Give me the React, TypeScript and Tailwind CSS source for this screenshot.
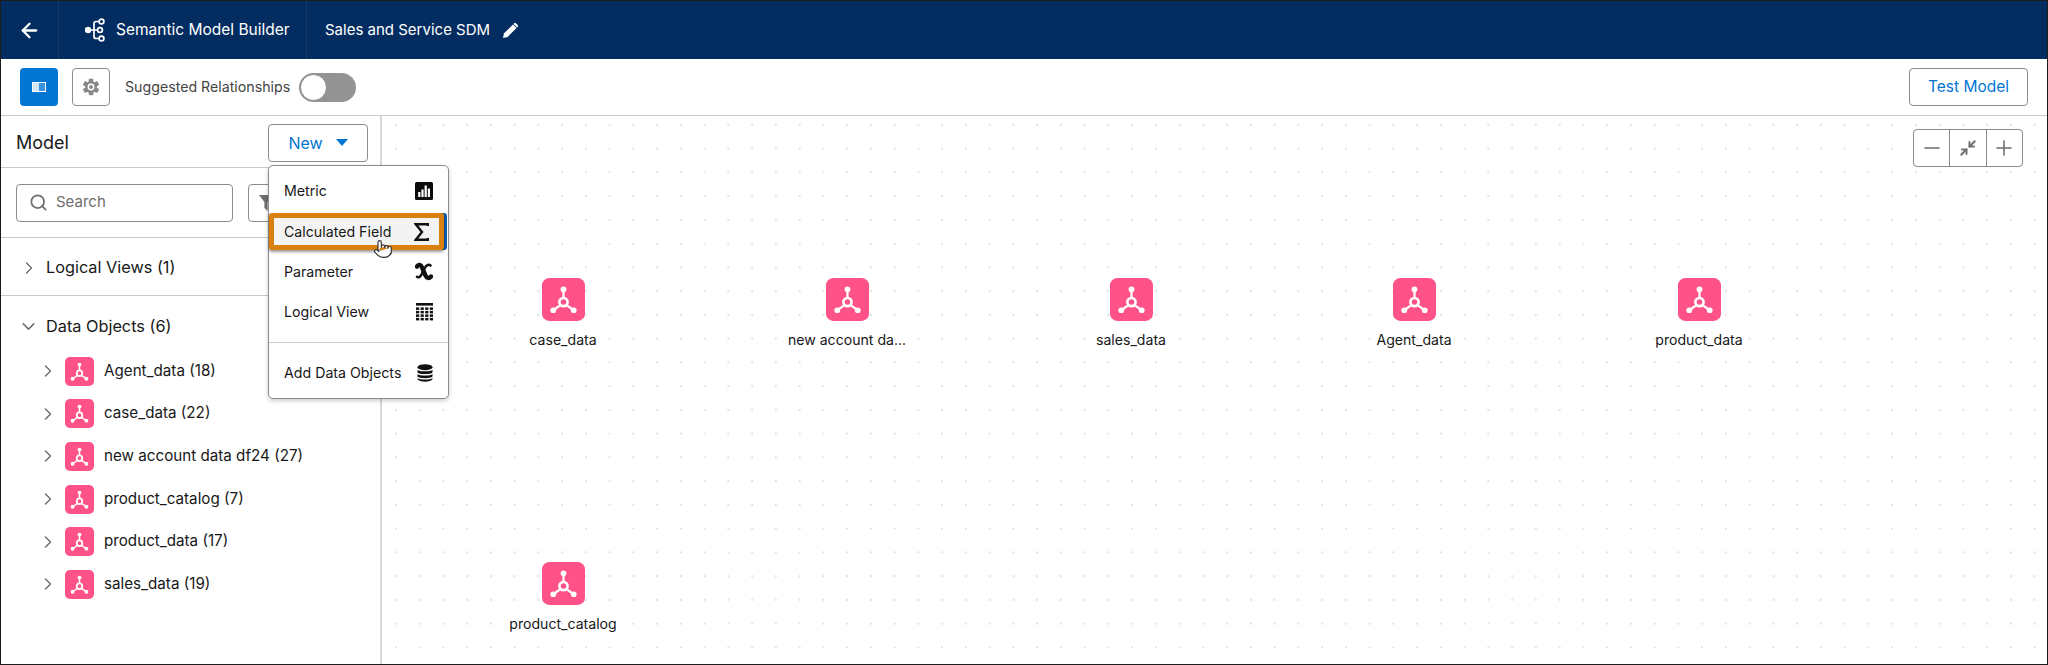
import { ArrowLeft, ChevronDown, ChevronRight, Minimize2, Minus, Plus, Pointer, Search } from 'lucide-react';

const dataObjects = [
  'Agent_data (18)',
  'case_data (22)',
  'new account data df24 (27)',
  'product_catalog (7)',
  'product_data (17)',
  'sales_data (19)',
];

// nodes sit on a free canvas, so their centre points are the content
const canvasNodes = [
  { label: 'case_data', left: 'left-[181px]', top: 'top-[162px]' },
  { label: 'new account da...', left: 'left-[465px]', top: 'top-[162px]' },
  { label: 'sales_data', left: 'left-[749px]', top: 'top-[162px]' },
  { label: 'Agent_data', left: 'left-[1032px]', top: 'top-[162px]' },
  { label: 'product_data', left: 'left-[1317px]', top: 'top-[162px]' },
  { label: 'product_catalog', left: 'left-[181px]', top: 'top-[446px]' },
];

const DataIcon = ({ size }: { size: number }) => (
  <svg width={size} height={size} viewBox="0 0 42 42" className="shrink-0 rounded-[17%] bg-[#fe5289]">
    <g stroke="#fff" strokeWidth="2.2" fill="none">
      <path d="M21 11v9" />
      <path d="M11 31.5l7-5M31 31.5l-7-5" />
      <circle cx="21" cy="23.5" r="4" strokeWidth="2.6" />
    </g>
    <g fill="#fff">
      <circle cx="21" cy="11" r="2.8" />
      <circle cx="11" cy="31.5" r="2.8" />
      <circle cx="31" cy="31.5" r="2.8" />
    </g>
  </svg>
);

const BuilderIcon = () => (
  <svg width="20" height="26" viewBox="0 0 20 26" fill="none" stroke="#fff" strokeWidth="1.7">
    <circle cx="3" cy="13" r="2.4" fill="#fff" />
    <path d="M5 13h7M9 13V6.5a2 2 0 0 1 2-2h3M9 13v6.5a2 2 0 0 0 2 2h3" />
    <circle cx="16.5" cy="4.5" r="2.4" />
    <circle cx="15" cy="13" r="2.4" />
    <circle cx="16.5" cy="21.5" r="2.4" />
  </svg>
);

const PencilIcon = () => (
  <svg width="17" height="17" viewBox="0 0 18 18" fill="#fff">
    <path d="M1 17l1.2-5L11.6 2.6l3.8 3.8L6 15.8z" />
    <path d="M12.8 1.4a1.3 1.3 0 0 1 1.9 0l1.9 1.9a1.3 1.3 0 0 1 0 1.9l-.6.6-3.8-3.8z" />
  </svg>
);

const GearIcon = () => (
  <svg width="18" height="18" viewBox="0 0 24 24">
    <g fill="#8a8886">
      <circle cx="12" cy="12" r="8" />
      {[0, 60, 120, 180, 240, 300].map((a) => (
        <rect key={a} x="9" y="1" width="6" height="5" rx="1" transform={`rotate(${a} 12 12)`} />
      ))}
    </g>
    <circle cx="12" cy="12" r="4.6" fill="#fff" />
    <circle cx="12" cy="12" r="2.6" fill="#8a8886" />
  </svg>
);

const MetricIcon = () => (
  <svg width="18" height="18" viewBox="0 0 18 18">
    <rect width="18" height="18" rx="1.5" fill="#0c0c0c" />
    <g fill="#fff">
      <rect x="3.2" y="10" width="2.2" height="5" />
      <rect x="6.4" y="7.5" width="2.2" height="7.5" />
      <rect x="9.6" y="3.5" width="2.2" height="11.5" />
      <rect x="12.8" y="6.5" width="2.2" height="8.5" />
    </g>
  </svg>
);

const SigmaIcon = () => (
  <svg width="15" height="18" viewBox="0 0 15 18" fill="none" stroke="#111" strokeWidth="2.4">
    <path d="M14 3V1.3H1.8L8 9 1.8 16.7H14V15" />
  </svg>
);

const VariableIcon = () => (
  <svg width="18" height="19" viewBox="0 0 18 19" fill="none" stroke="#111" strokeLinecap="round">
    <path d="M2 4.5C3.5 2 6 2.5 7 5.5l3.5 8c1.2 3 3.5 3.2 5.5 1" strokeWidth="4.4" />
    <path d="M15.5 3.5c-2-1.7-4.2-.5-6 3L6.8 12C5.3 15 3.6 16 2 14.8" strokeWidth="2.6" />
  </svg>
);

const TableIcon = () => (
  <svg width="17" height="18" viewBox="0 0 17 18" fill="#111">
    <rect width="17" height="2.6" />
    {[4.4, 7.9, 11.4, 14.9].map((y) =>
      [0, 4.6, 9.2, 13.8].map((x) => <rect key={`${x}-${y}`} x={x} y={y} width="3.2" height="2.5" />),
    )}
  </svg>
);

const DatabaseIcon = () => (
  <svg width="16" height="18" viewBox="0 0 16 18" fill="#111">
    <ellipse cx="8" cy="3.2" rx="7.5" ry="3" />
    <path d="M.5 5.8C2 7.8 14 7.8 15.5 5.8v2.6C14 10.6 2 10.6.5 8.4z" />
    <path d="M.5 10C2 12 14 12 15.5 10v2.6C14 14.8 2 14.8.5 12.6z" />
    <path d="M.5 14C2 16 14 16 15.5 14v1c-1.5 3.6-13.5 3.6-15 0z" />
  </svg>
);

export default function App() {
  return (
    <div className="relative flex h-[665px] w-[2048px] flex-col overflow-hidden border border-[#1c1c1c] bg-white font-[family-name:Inter,sans-serif] text-[#181818]">
      <header className="flex h-[58px] shrink-0 items-stretch bg-[#032d60] text-white">
        <div className="flex w-[58px] items-center justify-center border-r border-[#1c3a63]">
          <ArrowLeft size={23} strokeWidth={2.4} />
        </div>
        <div className="flex w-[248px] items-center gap-[11px] border-r border-[#1c3a63] pl-[26px]">
          <BuilderIcon />
          <span className="text-[15.5px]">Semantic Model Builder</span>
        </div>
        <div className="flex items-center gap-[12px] pl-[18px]">
          <span className="text-[15px]">Sales and Service SDM</span>
          <PencilIcon />
        </div>
      </header>

      <div className="flex h-[57px] shrink-0 items-center border-b border-[#c9c9c9] pl-[19px] pr-[19px]">
        <button className="flex h-[38px] w-[38px] items-center justify-center rounded-[4px] bg-[#0176d3]">
          <span className="flex h-[10px] w-[14px] border border-white bg-[#3d93dd]">
            <span className="w-[6px] bg-[#d5e8f8]" />
          </span>
        </button>
        <button className="ml-[14px] flex h-[38px] w-[38px] items-center justify-center rounded-[4px] border border-[#8c8c8c]">
          <GearIcon />
        </button>
        <span className="ml-[15px] text-[14.2px] text-[#444444]">Suggested Relationships</span>
        <span className="ml-[9px] flex h-[29px] w-[57px] items-center rounded-full bg-[#939393] pl-[1px]">
          <span className="h-[27px] w-[27px] rounded-full border border-[#8c8c8c] bg-white" />
        </span>
        <button className="ml-auto h-[38px] w-[119px] rounded-[4px] border border-[#8c8c8c] text-[15.5px] text-[#0176d3]">
          Test Model
        </button>
      </div>

      <div className="flex min-h-0 flex-1">
        <aside className="w-[381px] shrink-0 border-r-2 border-[#d8d8d8]">
          <div className="flex h-[52px] items-center justify-between border-b border-[#c9c9c9] pl-[15px] pr-[12px] pt-[2px]">
            <span className="text-[18px]">Model</span>
            <button className="flex h-[38px] w-[100px] items-center justify-center gap-[13px] rounded-[4px] border border-[#8c8c8c] text-[16px] text-[#0176d3]">
              New
              <span className="h-0 w-0 border-x-[6px] border-t-[7px] border-x-transparent border-t-[#0176d3]" />
            </button>
          </div>

          <div className="flex h-[70px] items-center gap-[15px] border-b border-[#c9c9c9] pl-[15px]">
            <div className="flex h-[38px] w-[217px] items-center gap-[8px] rounded-[4px] border border-[#8c8c8c] pl-[12px] text-[15px] text-[#706e6b]">
              <Search size={19} strokeWidth={2.2} />
              <span>Search</span>
            </div>
            <button className="flex h-[38px] w-[40px] items-center rounded-[4px] border border-[#8c8c8c] pl-[10px]">
              <svg width="14" height="16" viewBox="0 0 14 16" fill="#706e6b">
                <path d="M0 0h14L8.6 7v9L5.4 13V7z" />
              </svg>
            </button>
          </div>

          <div className="flex h-[58px] items-center gap-[7px] border-b border-[#c9c9c9] pl-[18px] pt-[2px] text-[16.3px]">
            <ChevronRight size={20} strokeWidth={1.7} className="text-[#706e6b]" />
            <span>Logical Views (1)</span>
          </div>

          <div className="flex h-[54px] items-center gap-[7px] pl-[17px] pt-[6px] text-[16.3px]">
            <ChevronDown size={21} strokeWidth={1.7} className="text-[#706e6b]" />
            <span>Data Objects (6)</span>
          </div>

          {dataObjects.map((name) => (
            <div key={name} className="flex h-[42.6px] items-center pl-[37px] text-[15.2px]">
              <ChevronRight size={20} strokeWidth={1.7} className="text-[#706e6b]" />
              <span className="ml-[7px]">
                <DataIcon size={29} />
              </span>
              <span className="ml-[10px]">{name}</span>
            </div>
          ))}
        </aside>

        <main className="relative flex-1 bg-[radial-gradient(circle,#e0e2e6_1px,transparent_1.2px)] bg-[length:23.75px_23.75px] bg-[position:2px_-3px]">
          {canvasNodes.map((node) => (
            <div key={node.label} className={`absolute flex w-0 flex-col items-center ${node.left} ${node.top}`}>
              <DataIcon size={43} />
              <span className="mt-[9px] whitespace-nowrap text-[14.1px] leading-[20px]">{node.label}</span>
            </div>
          ))}

          <div className="absolute right-[24px] top-[13px] flex h-[38px] w-[110px] overflow-hidden rounded-[4px] border border-[#8c8c8c] bg-white text-[#706e6b]">
            <span className="flex flex-1 items-center justify-center">
              <Minus size={24} strokeWidth={1.6} />
            </span>
            <span className="flex flex-1 items-center justify-center border-x border-[#8c8c8c]">
              <Minimize2 size={18} strokeWidth={2.6} />
            </span>
            <span className="flex flex-1 items-center justify-center">
              <Plus size={24} strokeWidth={1.6} />
            </span>
          </div>
        </main>
      </div>

      {/* open "New" menu, lies over the panel edge */}
      <div className="absolute left-[267px] top-[164px] flex h-[234px] w-[181px] flex-col rounded-[5px] border border-[#8c8c8c] bg-white text-[14.2px] shadow-[0_2px_4px_rgba(0,0,0,0.2)]">
        <div className="mt-[4px] flex h-[41px] items-center justify-between pl-[15px] pr-[15px]">
          Metric
          <MetricIcon />
        </div>
        <div className="mt-[2px] mr-[4px] flex h-[37px] items-center justify-between rounded-[3px] border-[5px] border-[#d9800f] bg-[#f3f3f3] pl-[10px] pr-[10px] shadow-[0_2px_3px_rgba(0,0,0,0.4),3px_0_0_#0f5da8]">
          Calculated Field
          <SigmaIcon />
        </div>
        <div className="mt-[1px] flex h-[41px] items-center justify-between pl-[15px] pr-[15px]">
          Parameter
          <VariableIcon />
        </div>
        <div className="flex h-[39px] items-center justify-between pl-[15px] pr-[15px]">
          Logical View
          <TableIcon />
        </div>
        <div className="mt-[11px] border-t border-[#c9c9c9]" />
        <div className="flex flex-1 items-center justify-between pl-[15px] pr-[15px] pt-[4px]">
          Add Data Objects
          <DatabaseIcon />
        </div>
      </div>

      {/* mouse pointer in the screenshot */}
      <Pointer size={20} strokeWidth={1.4} fill="#fff" className="absolute left-[372px] top-[238px] text-[#333333]" />
    </div>
  );
}
